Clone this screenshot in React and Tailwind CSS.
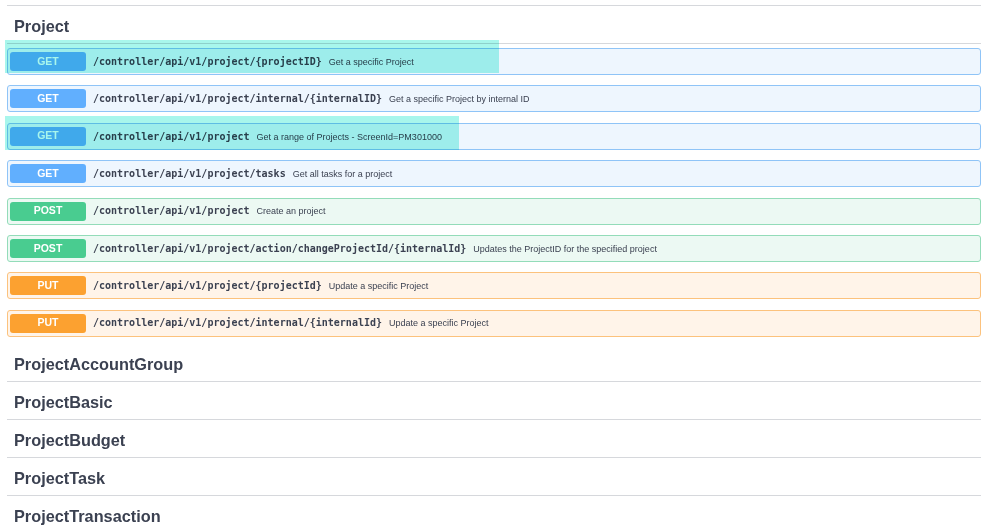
const ops = [
  { method: 'GET', path: '/controller/api/v1/project/{projectID}', desc: 'Get a specific Project' },
  { method: 'GET', path: '/controller/api/v1/project/internal/{internalID}', desc: 'Get a specific Project by internal ID' },
  { method: 'GET', path: '/controller/api/v1/project', desc: 'Get a range of Projects - ScreenId=PM301000' },
  { method: 'GET', path: '/controller/api/v1/project/tasks', desc: 'Get all tasks for a project' },
  { method: 'POST', path: '/controller/api/v1/project', desc: 'Create an project' },
  { method: 'POST', path: '/controller/api/v1/project/action/changeProjectId/{internalId}', desc: 'Updates the ProjectID for the specified project' },
  { method: 'PUT', path: '/controller/api/v1/project/{projectId}', desc: 'Update a specific Project' },
  { method: 'PUT', path: '/controller/api/v1/project/internal/{internalId}', desc: 'Update a specific Project' },
]

const styles = {
  GET: { row: 'bg-[#eef6fe] border-[#8fc4f7]', badge: 'bg-[#61affe]' },
  POST: { row: 'bg-[#ecf9f3] border-[#93dcb9]', badge: 'bg-[#49cc90]' },
  PUT: { row: 'bg-[#fff4e9] border-[#fcc27d]', badge: 'bg-[#fca130]' },
}

const tags = ['ProjectAccountGroup', 'ProjectBasic', 'ProjectBudget', 'ProjectTask', 'ProjectTransaction']

function TagHeading({ name }) {
  return (
    <div className="h-[38px] flex items-center pt-[3px] pl-[7px] border-b border-[#d6d8dc]">
      <h3 className="text-[16.3px] font-bold text-[#3b4151]">{name}</h3>
    </div>
  )
}

function OpRow({ op }) {
  const s = styles[op.method]
  return (
    <div className={`h-[27px] flex items-center border rounded-[3px] ${s.row}`}>
      <span className={`ml-[2px] w-[76px] h-[19px] rounded-[3px] flex items-center justify-center text-white text-[10.5px] font-bold ${s.badge}`}>
        {op.method}
      </span>
      <div className="flex items-baseline">
        <span className="ml-[7px] text-[10px] font-bold text-[#3b4151] font-['DejaVu_Sans_Mono',monospace]">{op.path}</span>
        <span className="ml-[7px] text-[9px] text-[#3b4151]">{op.desc}</span>
      </div>
    </div>
  )
}

export default function App() {
  return (
    <div className="relative w-[999px] h-[531px] overflow-hidden bg-white font-['Liberation_Sans',Arial,sans-serif]">
      <div className="ml-[7px] w-[974px]">
        <div className="h-[6px] border-b border-[#d6d8dc]" />
        <TagHeading name="Project" />
        <div className="pt-[4px] pb-[7px] flex flex-col gap-[10.4px]">
          {ops.map((op, i) => <OpRow key={i} op={op} />)}
        </div>
        {tags.map(t => <TagHeading key={t} name={t} />)}
      </div>

      {/* highlighter marks */}
      <div className="absolute left-[5px] top-[40px] w-[494px] h-[33px] bg-[#a8f6ec] mix-blend-multiply" />
      <div className="absolute left-[5px] top-[116px] w-[454px] h-[34px] bg-[#a8f6ec] mix-blend-multiply" />
    </div>
  )
}
